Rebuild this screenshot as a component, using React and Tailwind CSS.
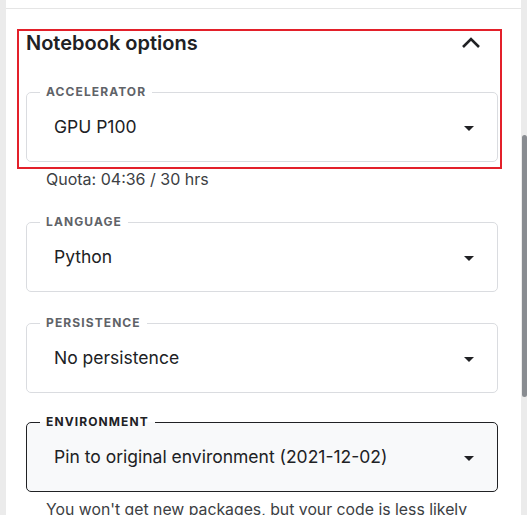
import React from 'react';

const Caret = () => (
  <svg width="24" height="24" viewBox="0 0 24 24" className="shrink-0">
    <path d="M7 10l5 5 5-5z" fill="#202124" />
  </svg>
);

// One outlined select with the label sitting in the border
const Field = ({ label, value, active }) => (
  <fieldset
    className={`rounded-[5px] border pb-[6px] ${
      active ? 'border-[#202124] bg-[#f8f9fa]' : 'border-[#dadce0] bg-white'
    }`}
  >
    <legend
      className={`ml-[13px] px-[6px] text-[12px] leading-[16px] font-bold tracking-[1.1px] ${
        active ? 'text-[#202124]' : 'text-[#5f6368]'
      }`}
    >
      {label}
    </legend>
    <div className="h-[55px] flex items-center justify-between pl-[27px] pr-[16px]">
      <span className="text-[17.5px] text-[#202124]">{value}</span>
      <Caret />
    </div>
  </fieldset>
);

const App = () => {
  return (
    <div className="w-[527px] h-[515px] flex overflow-hidden bg-white font-['Inter',sans-serif]">
      <div className="w-[6px] shrink-0 bg-[#ebebeb]" />

      <div className="flex-1 relative">
        <div className="h-[9px] border-b border-[#e5e5e5]" />

        <div className="pl-[20px] pr-[23px]">
          {/* Header */}
          <div className="mt-[20px] h-[28px] flex items-center justify-between">
            <h2 className="text-[20px] leading-[28px] font-semibold text-[#202124]">
              Notebook options
            </h2>
            <svg width="24" height="24" viewBox="0 0 24 24" className="mr-[15px]">
              <polyline
                points="4,16 12,8 20,16"
                fill="none"
                stroke="#202124"
                strokeWidth="2.6"
              />
            </svg>
          </div>

          <div className="mt-[27px]">
            <Field label="ACCELERATOR" value="GPU P100" />
          </div>
          <p className="mt-[5px] ml-[20px] text-[16px] leading-[24px] text-[#3c4043]">
            Quota: 04:36 / 30 hrs
          </p>

          <div className="mt-[23px]">
            <Field label="LANGUAGE" value="Python" />
          </div>
          <div className="mt-[23px]">
            <Field label="PERSISTENCE" value="No persistence" />
          </div>
          <div className="mt-[21px]">
            <Field label="ENVIRONMENT" value="Pin to original environment (2021-12-02)" active />
          </div>
          <p className="mt-[6px] ml-[20px] text-[15.8px] leading-[24px] text-[#3c4043] whitespace-nowrap">
            You won't get new packages, but your code is less likely
          </p>
        </div>

        {/* highlight annotation */}
        <div className="absolute left-[11px] top-[29px] w-[485px] h-[140px] border-2 border-[#e3202a] pointer-events-none" />
      </div>

      <div className="w-[6px] shrink-0 bg-[#ebebeb] flex flex-col">
        <div className="mt-[135px] ml-[1px] h-[262px] bg-[#898c91] rounded-[3px]" />
      </div>
    </div>
  );
};

export default App;
